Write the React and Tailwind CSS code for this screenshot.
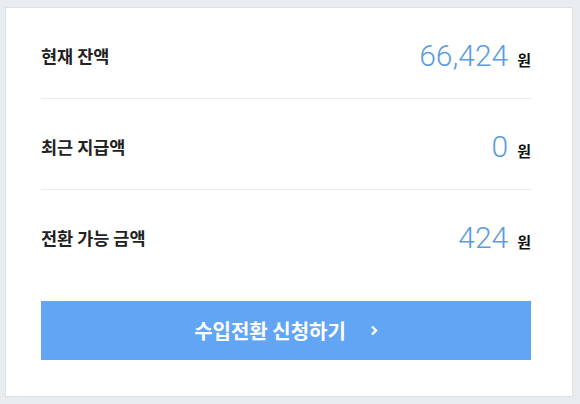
import React from "react";

const rows = [
  { label: "현재 잔액", value: "66,424" },
  { label: "최근 지급액", value: "0" },
  { label: "전환 가능 금액", value: "424" },
];

const App = () => {
  return (
    <div className="w-[580px] h-[404px] bg-[#e9ecef] pt-[7px] pl-[5px] pr-[7px] pb-[7px]">
      <div className="h-[390px] bg-white border border-[#dde1e5] pl-[35px] pr-[41px] font-['Noto_Sans_CJK_KR',sans-serif]">
        {rows.map((row, i) => (
          <div
            key={row.label}
            className={`flex items-center justify-between h-[34px] box-content pt-[31px] pb-[25px] ${
              i < rows.length - 1 ? "border-b border-[#e9ebee]" : ""
            }`}
          >
            <span className="text-[17.5px] font-bold text-[#222]">{row.label}</span>
            <div className="flex items-baseline">
              <span className="font-['Roboto',sans-serif] font-light text-[30px] leading-none text-[#5b9be0]">
                {row.value}
              </span>
              <span className="ml-[9px] text-[15px] font-bold text-[#111]">원</span>
            </div>
          </div>
        ))}

        {/* 전환 신청 버튼 */}
        <button className="mt-[21px] w-full h-[59px] bg-[#61a5f4] flex items-center justify-center gap-[24px] text-white">
          <span className="text-[20px] font-bold">수입전환 신청하기</span>
          <svg width="8" height="11" viewBox="0 0 8 11" fill="none">
            <path d="M2 1.5L6 5.5L2 9.5" stroke="white" strokeWidth="2.4" />
          </svg>
        </button>
      </div>
    </div>
  );
};

export default App;
